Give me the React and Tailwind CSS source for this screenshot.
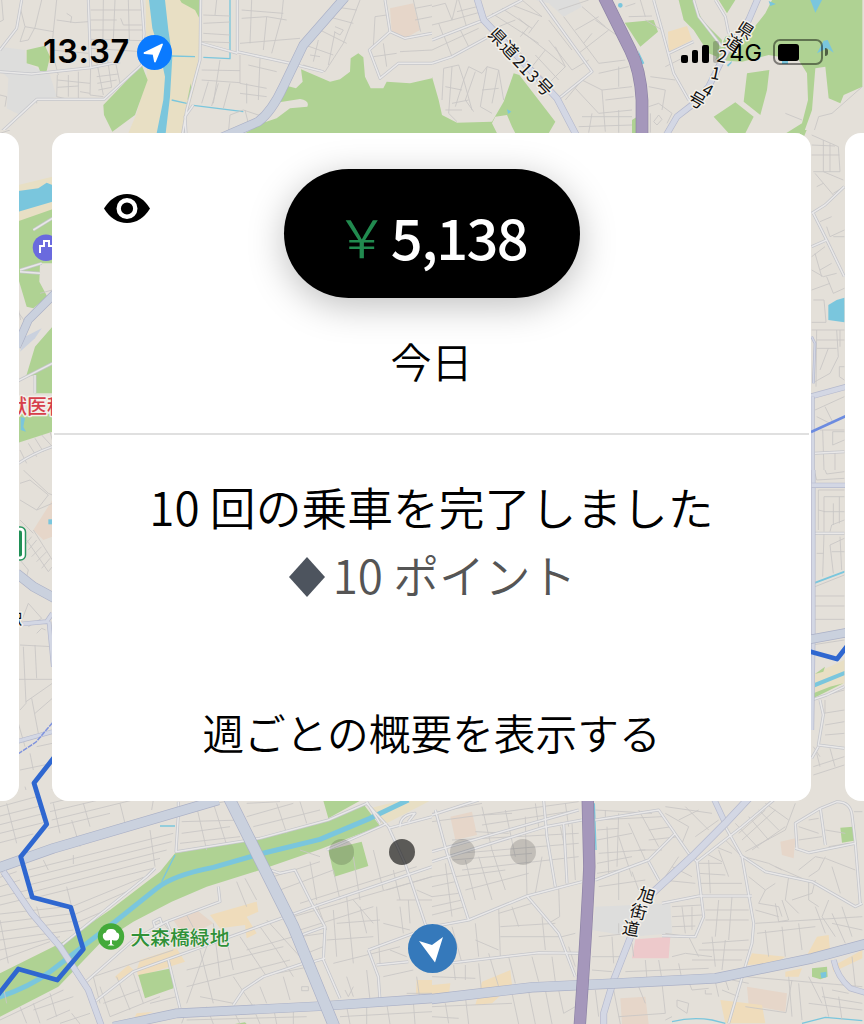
const LAND = "#e4e0d9"
const GREEN = "#afd293"
const SAND = "#e8dfc4"
const WATER = "#7ac6dd"
const PEACH = "#efdcbb"
const PINK = "#e6d6c9"
const GREY = "#dddddc"

// every tile is drawn at 3x, the viewBox brings it back to map size
const tiles = [
    {
        x: 0, y: 0, w: 432, h: 140,
        areas: [
            [SAND, "M437 0 H600 L598 130 L590 240 L545 400 H385 L410 340 L440 235 Z"],
            [GREY, "M0 140 L75 150 L80 190 L150 225 L170 290 L110 300 L60 345 L20 325 L25 235 L0 210Z"],
            [GREEN, "M540 0 H602 L598 55 L585 30 L545 8Z M310 315 L425 195 L443 240 L405 345 L337 395 L312 345Z M80 150 L135 137 L150 170 L140 213 L120 213 L115 200 L80 190Z M572 250 L576 285 L562 300Z"],
            [GREEN, "M735 400 L790 368 L830 355 L870 325 L922 320 Q930 302 900 297 L838 307 L862 258 L888 265 L908 245 L903 208 L990 245 L1020 238 L1050 215 L1052 175 L1075 160 L1090 172 L1095 230 L1112 265 L1150 265 L1160 245 L1230 250 L1296 235 V420 H735Z"],
            [PINK, "M1170 25 L1240 10 L1260 90 L1215 115 L1175 95Z"],
            [WATER, "M447 0 H495 L505 90 L517 170 L510 290 L497 400 H470 L490 300 L495 230 L480 160 L457 85Z"],
        ],
        creek: "M515 168 L585 170 M610 172 L690 176 V0 M515 300 L560 310 M580 316 L730 335",
        thin: "M0 65 L10 60 L5 0 M60 20 L75 80 L60 125 L85 120 L105 82 L125 0 M75 80 L160 95 L170 0 M160 95 L155 150 L265 160 M170 60 L225 68 L265 65 M200 40 L215 50 L212 68 M272 30 H425 M272 60 H350 M272 90 H430 M272 118 L430 122 M272 145 L425 155 M310 0 L308 200 M345 0 L340 118 M385 0 L388 120 M362 55 L370 75 H425 M272 200 L270 285 L310 290 M290 230 L355 222 M292 250 L350 240 M295 270 L335 262 M290 185 L310 285 M320 160 L335 262 M345 180 L360 250 M172 225 L170 290 L205 298 M172 240 L270 250 M172 262 L235 258 M205 225 V290 M235 215 V298 M240 275 L270 280 M155 150 L175 225 M0 285 L20 290 L15 320 M110 300 V310",
        thin2: "M610 45 L690 48 M610 70 L690 66 M610 100 L690 105 M605 125 L690 128 M650 0 L645 45 M725 30 L850 40 M725 55 L800 50 L860 60 M755 0 L750 130 M800 50 L790 150 M720 130 L900 115 M850 0 L845 50 L815 160 M605 210 L720 212 M605 240 L720 248 M660 180 L640 310 M625 245 L605 310 M655 250 L635 318 M720 165 V250 L800 265 M690 250 L670 325 M745 195 L830 215 M780 175 L775 300 M740 250 L740 310 M720 280 L800 290 M690 345 L730 330 L790 350 M690 345 L685 400 M735 330 L745 370 M1080 0 L1030 130 L975 215 L910 195 M960 90 L1040 130 M915 135 L1000 165 M930 165 L960 170 M985 50 L1060 70 M1000 20 L1070 30 M955 120 L940 185 M1005 95 L985 195 M1005 80 L1030 90 L1020 105 L1002 95 M1125 50 L1160 45 M1125 50 L1120 140 M1245 25 L1296 15 M1245 60 L1296 50 M1240 0 L1262 95 M1120 170 L1190 160 M1150 130 L1160 200 M1296 150 L1200 155",
        mid: "M265 0 L272 200 M0 215 L95 222 L270 203 L360 185 M425 0 L432 100 L425 195 L312 298 L110 298 L0 400 M602 0 L600 180 L560 330 L548 400 M712 0 L712 155 L870 190 M605 130 L712 160 M0 150 L50 85 L65 0 M1155 0 L1170 95 L1215 115 L1296 100 M1170 95 L1108 150 L1140 235 L1195 190 L1296 190 M558 400 L555 350 L580 315 M870 190 L970 215",
        roads: [["M1035 -8 L910 135 L850 260 Q815 335 775 365 L660 415", 25, "major"]],
    },
    {
        x: 432, y: 0, w: 432, h: 140,
        areas: [
            [GREY, "M310 0 H440 L450 20 L395 50 L350 10Z"],
            [GREEN, "M0 230 L20 300 L30 345 L75 368 L180 365 L215 305 L245 220 L262 225 L370 365 L350 400 H250 L240 380 L225 345 L190 350 L180 370 L195 400 V420 H0Z M578 68 L665 60 L678 95 L625 140Z M740 0 L755 60 L785 90 L830 160 L865 175 L870 120 L810 60 L785 0Z M860 0 H910 L885 40Z M600 360 L615 350 V400 H600Z"],
            [GREEN, "M1020 0 H1291 V260 L1235 285 L1225 310 L1190 295 L1180 200 L1150 205 L1140 330 L1115 400 H1062 L1110 370 L1128 300 L1125 220 L1100 180 L1010 165 L930 185 L850 180 L880 110 L960 90 L1000 40Z"],
            [GREEN, "M945 220 L1012 210 L1005 270 L985 345 L935 305Z M845 350 L910 307 L965 350 L940 400 H890Z"],
            [PEACH, "M708 95 L765 78 L780 120 L710 155Z"],
            [WATER, "M1135 0 H1170 L1150 38Z M1010 3 L1032 12 L1015 18Z M618 150 L637 190 L628 195Z M1155 160 L1175 122 L1187 120 L1205 158 L1185 145Z M885 195 L900 183 L898 190 L888 200Z M1050 180 H1068 V192 H1050Z M225 328 L238 335 L228 342Z M558 16 A7 7 0 1 0 572 16 A7 7 0 1 0 558 16"],
        ],
        creek: "",
        thin: "M0 20 L40 10 L60 60 L0 75 M60 60 L75 0 M20 70 L35 110 M75 35 L135 20 M80 0 L105 85 M60 60 L150 35 M0 150 L140 85 M35 105 L60 170 M85 90 L110 140 M180 40 L320 130 M210 25 L300 85 M240 15 L330 50 M265 110 L290 80 L260 55 M290 100 L320 60 M330 50 L270 0 M200 80 L250 60 M225 110 L300 200 L340 150 L270 95 M300 200 L350 250 L400 200 L340 150 M310 165 L380 240 M400 200 L370 140 M350 120 L420 210 L470 180 M400 100 L440 160 M350 60 L420 150 M395 50 L455 130 L480 100 M450 20 L520 80 M380 30 L470 0 M430 90 L500 50 M440 160 L530 90 M490 60 L560 110 M455 130 L500 190",
        thin2: "M35 205 L80 195 L95 240 L110 200 L150 220 L165 200 L200 210 L215 300 M35 205 L30 300 M60 200 L50 340 L75 365 M95 240 L70 320 M95 240 L120 330 M130 215 L100 300 L125 335 M165 200 L145 320 L180 340 M200 210 L180 310 M40 260 L90 270 M60 310 L110 300 M40 330 L90 330 M150 270 L200 265 M400 300 L450 240 L510 270 L600 260 M430 265 L500 340 L600 330 M450 240 L480 215 M500 220 L590 200 M510 270 L520 395 M450 350 H600 M520 300 L605 290 M440 380 L600 375 M500 190 L580 180 M560 200 V260 M480 340 L470 398 M560 330 V398 M580 20 L610 10 M590 50 L660 48 M625 0 L640 50 M655 230 L730 240 M650 260 L700 270 L690 330 M650 320 L680 310 L720 340 L705 370 M665 365 L680 345 L690 358 L675 375Z M655 340 V398 M640 60 L690 90 M700 200 L760 170 M1291 260 L1200 340 L1160 350 L1145 398 M1060 340 L1110 360",
        mid: "M0 120 L155 60 L270 0 M325 0 L480 215 L375 300 M0 190 L60 170 L170 110 M665 0 L690 90 L725 220 L770 300 M785 0 L800 50 L870 140 M710 160 L785 125 M850 0 L880 50 L890 100",
        roads: [
            ["M135 -5 L155 60 L375 295 L435 410", 17, "soft"],
            ["M978 -5 L950 60 L880 160 L830 260 L780 315 L735 350 L700 410", 16, "soft"],
            ["M517 -8 L595 150 Q625 210 630 300 V420", 34, "highway"],
        ],
    },
    {
        x: 0, y: 130, w: 70, h: 340,
        areas: [
            [SAND, "M55 165 L157 140 V245 L55 275Z"],
            [GREEN, "M50 275 L157 238 V400 L120 400 L118 455 L142 500 L100 535 L80 530 L50 430Z M157 590 L105 650 L78 740 L105 735 V790 H157Z M50 850 H157 V905 L50 940Z"],
            [WATER, "M55 183 L115 175 L140 158 L157 165 V215 L55 245Z M62 860 L75 865 L70 890 L78 905 L62 900Z"],
            ["#cad1de", "M75 620 L125 595 L105 625 L60 665Z"],
        ],
        creek: "",
        thin: "M0 10 L30 0 M50 540 L75 575 M50 510 L62 570 M85 940 L110 980 M105 925 L130 965 M125 915 L157 950 M60 960 L80 1000 M150 905 L157 930 M120 490 L157 480",
        mid: "M50 755 L157 700 M55 1000 Q100 970 157 950 M60 420 L125 400 M60 425 L120 430 M100 300 L157 265 M105 735 V790",
        roads: [["M165 490 L85 570 L50 650", 22, "major"]],
    },
    {
        x: 0, y: 470, w: 70, h: 340,
        areas: [[PINK, "M157 90 L100 180 L130 210 L157 200Z"], [WATER, "M145 148 H157 V163 H145Z"]],
        creek: "",
        thin: "M70 0 L145 70 L157 75 M60 40 L90 30 L145 75 L110 120 L60 90 M110 120 L157 100 M80 210 L145 305 M100 180 L157 270 M75 225 L95 200 M85 240 L110 210 M95 260 L125 230 M110 275 L140 245 M125 295 L150 265 M145 305 L157 290 M60 150 L100 190 M60 270 L85 300 L80 320 M60 465 L85 400 L125 445 L85 470 M110 490 L125 475 L137 480 M60 525 L157 530 M105 525 L110 625 M55 628 H157 M70 530 L78 700 L60 720 M78 695 L157 640 M95 685 L115 790 M55 760 L75 830 M105 730 L157 685 M60 900 L157 880 M90 850 L100 900 M55 990 L100 975 L157 960 M75 950 L95 1020 M110 830 L157 820",
        mid: "",
        roads: [
            ["M50 310 L100 350 L165 385", 26, "major"],
            ["M65 462 L140 455 L157 430 M147 455 L160 590", 10, "soft"],
            ["M50 815 L157 785", 10, "soft"],
        ],
    },
    {
        x: 800, y: 130, w: 64, h: 340,
        areas: [[GREEN, "M0 0 L20 0 L10 25 L0 20Z"], [WATER, "M85 525 L110 510 L133 503 V577 L85 570Z"]],
        creek: "",
        thin: "M35 15 L115 50 L120 125 L40 125 M70 30 V125 M90 40 V125 M35 75 H118 M35 45 L105 48 M45 130 L100 195 M70 125 L130 150 M50 170 L70 160 M60 275 L95 260 M100 190 L133 170 M80 290 L90 320 L133 300 M100 320 H133 M35 380 L75 350 M45 370 L65 440 M60 420 L95 400 M35 420 L70 440 L110 430 M80 440 L100 490 L133 475 M35 480 L90 460 M40 510 H72 L78 577 M35 577 H78 M35 600 H133 M50 600 L48 770 M50 630 H133 M50 655 H110 M110 600 L115 680 L90 730 L45 755 M85 655 L60 720 M120 600 V650 M133 710 H118 V740 L133 750 M45 840 L133 800 M50 860 L90 880 M75 830 L100 880 M60 900 H133 M68 900 L72 1020 M98 905 H133 M98 905 V945 L133 930 M105 965 V1020",
        mid: "M35 250 L75 225 L133 170 M40 250 L80 330 L133 440 M35 350 L80 330 M45 970 L133 965",
        roads: [["M30 800 L140 770", 14, "soft"], ["M38 800 V1030", 8, "soft"], ["M35 620 L45 640 L40 760", 4, "soft"]],
    },
    {
        x: 800, y: 470, w: 64, h: 340,
        areas: [[SAND, "M45 610 L133 570 V640 L45 680Z"], [GREEN, "M45 612 L75 590 L70 605Z M40 670 L90 650 L130 640 L40 685Z"], [WATER, "M45 335 L133 302 V308 L45 341Z M45 638 L133 603 V616 L45 652Z"]],
        creek: "",
        thin: "M45 10 L50 30 L133 25 M75 0 L80 12 L133 5 M55 60 H133 M55 60 V180 M72 80 H133 M72 80 V185 M72 125 H133 M55 120 L75 125 M118 80 V160 M90 185 L95 165 L133 150 M100 100 V165 M72 190 L68 320 M50 250 H70 M90 225 L100 310 M90 225 L133 205 M95 245 H133 M120 200 L125 300 M45 350 L133 315 M45 378 H133 M45 408 H133 M45 448 H133 M35 525 L133 510 M75 690 V730 M80 675 L133 660 M70 730 L133 720 M75 765 L133 755 M75 795 L133 790 M50 850 L60 890 M90 835 L105 890 M40 890 L133 860 M40 915 L133 885 M40 830 L60 860 M45 1000 Q90 970 133 1000",
        mid: "M45 190 H133 M60 690 L70 735 L55 825 L133 835 M35 690 L80 675 L133 650 M35 865 L55 830 M40 1000 Q90 960 150 1000 M120 1000 L145 970",
        roads: [["M40 -5 V500 L36 780", 9, "soft"], ["M35 46 H140", 12, "soft"], ["M30 508 L140 488", 24, "major"]],
    },
    {
        x: 0, y: 790, w: 432, h: 234,
        areas: [
            [PINK, "M520 390 L590 360 L640 400 L600 420 L540 420Z"],
            [PEACH, "M630 375 L770 335 L775 365 L740 380 L770 430 L740 445 L735 405 L660 415Z M420 510 L530 475 L555 515 L415 560 L410 540Z M345 560 L385 525 L400 540 L355 572Z M1250 570 H1296 V612 H1248Z M410 670 L460 665 L400 690Z"],
            [GREEN, "M0 550 L190 455 L330 360 L480 245 L525 190 L780 145 L985 90 L1090 42 L1140 108 L960 178 L780 240 L620 290 L515 335 L400 395 L300 460 L175 590 L0 680Z M970 32 H1080 L985 85Z M985 180 L1085 155 L1105 228 L1003 260Z M415 555 L515 535 L520 595 L435 625Z M705 702 L735 697 L740 702Z"],
            [SAND, "M1110 55 L1200 32 H1290 L1150 105Z"],
        ],
        creek: "M480 108 H525 M525 195 L485 275",
        thin: "M0 50 L110 20 M0 78 L120 48 M0 104 L125 72 M0 130 L130 98 M0 158 L100 132 M155 90 L480 10 M150 65 L380 10 M145 115 L330 70 M150 40 L250 15 M0 290 L60 270 M0 262 L50 245 M85 240 L520 130 M85 262 L515 155 M90 284 L500 180 M100 305 L480 205 M110 322 L460 235 M215 350 L430 262 M220 375 L380 305 M225 400 L320 360 M0 320 L85 300 M0 345 L95 322 M0 372 L200 350 M0 398 L210 372 M0 425 L215 395 M0 450 L220 420 M0 480 L180 440 M0 510 L150 455 M20 40 L50 160 M160 40 L180 130 M215 90 L240 170 M250 40 L270 110 M360 40 L380 120 M450 120 L465 230 M220 195 V222 M200 290 L215 350 M130 210 L145 240 M0 390 L25 520 M110 350 L130 420 M10 590 L20 640 M460 30 L455 60",
        thin2: "M545 60 L700 30 M545 95 L730 90 M545 130 L690 110 M540 160 L720 140 M590 50 L620 180 M640 40 L680 165 M740 80 L880 40 M760 110 L960 60 M830 40 L860 130 M900 35 L920 100 M740 40 L840 35 M710 275 L740 350 M735 265 L770 330 M410 430 L450 480 M480 385 L520 440 M560 375 L600 450 M640 400 L660 560 M680 450 L700 540 M720 440 L800 560 M740 480 L880 440 M560 540 L850 470 M600 480 L640 640 M560 590 L870 510 M600 620 L700 640 M620 470 L560 640 M780 410 L830 480 L880 560 M800 390 L900 500 M830 550 L930 530 M780 590 L800 640 M850 560 L870 630 M700 560 L760 650 M905 590 H925 V602 H905Z M300 640 L280 560 L520 480 M300 590 L330 680 M350 560 L390 660 M400 550 L430 640 M330 680 L480 620 M310 640 L420 600 M450 640 L530 620 M0 690 L190 600 M60 650 L80 700 M100 640 L120 700 M150 610 L170 680 M100 660 L220 620 M140 690 L210 660 M215 670 L240 702 M180 700 L270 670",
        thin3: "M820 260 L960 215 M840 300 L1000 240 M900 180 L960 200 M900 340 L1250 230 M880 380 L1296 260 M900 420 L1120 350 M930 215 L950 330 M1000 240 L1020 330 M1060 200 L1080 330 M1120 180 L1150 300 M1180 240 L1200 330 M1040 320 L1060 520 M1080 350 L1100 430 M1130 350 L1140 520 M1000 360 L1010 500 M950 340 L980 420 M1060 330 L1120 400 M1010 400 L1140 390 M980 450 L1120 440 M900 440 L970 430 M920 490 L970 470 M1000 520 L1200 470 M1040 560 L1060 620 M1035 600 L1045 620 L1060 590 M1100 540 L1110 630 M1200 350 L1210 430 M1150 400 L1230 420 M1170 480 L1220 500 M1250 300 L1296 320 M1160 300 L1296 260 M1250 560 L1260 630 M1220 610 H1296 M1190 330 L1296 330 M1225 330 L1230 400 M1150 560 L1240 540 M560 660 L545 700 M620 650 L640 702 M700 660 L720 702 M760 655 L780 702 M820 650 L830 702 M560 690 L920 680 M880 650 V702 M1040 650 L1050 702 M1100 650 V702 M1160 640 L1170 702 M1020 680 L1296 665 M1240 635 L1245 702",
        mid: "M535 75 L528 185 L780 145 L985 90 L1100 40 L1165 110 L1215 220 L1275 400 L1296 440 M1100 35 L1140 100 M535 35 V70 M255 578 L400 450 L500 395 L660 335 L655 290 M500 395 L515 430 M285 635 L400 545 L830 390 L970 340 L1296 230 M505 510 L540 655 M810 240 L840 250 L885 240 L935 340 L975 410 L970 510 L1020 625 M905 435 L975 410 M940 515 L975 505 M790 560 L940 510 M700 645 L730 600 L790 560 M1105 480 L1135 560 L1140 630 M1105 480 L1240 430 M1130 525 L1225 515 M980 180 L1140 110 L1160 100 M1200 110 Q1200 75 1245 70 L1225 95 M1165 115 L1296 80 M460 395 L480 385 L485 400 L465 410Z M180 470 L440 260 L465 235",
        roads: [
            ["M-10 235 L160 175 L655 30", 27, "major"],
            ["M10 245 L95 370 L180 470 L265 600 L305 710", 16, "soft"],
            ["M340 710 L530 670 L970 648 L1300 625", 25, "major"],
            ["M685 20 L740 130 L880 410 L1005 715", 32, "major"],
        ],
        river: "M-5 622 Q90 590 150 545 Q260 460 345 395 L470 295 Q520 255 640 232 L780 192 L960 148 L1110 85 L1225 30",
    },
    {
        x: 432, y: 790, w: 432, h: 234,
        areas: [
            [PINK, "M55 80 L120 65 L135 135 L70 150Z M1045 155 L1090 145 L1085 205 L1050 195Z M945 590 L1065 610 L1060 665 L950 645Z M565 625 L640 620 L650 702 H570Z"],
            [GREY, "M490 350 L715 340 L720 430 L600 440 L480 420Z"],
            ["#edc9cb", "M610 448 L715 440 L710 505 L600 505Z"],
            [PEACH, "M0 585 L55 580 L50 620 L0 615Z M150 575 L235 540 L240 585 L180 640 L130 645Z M945 525 L960 490 L1060 500 L1030 520Z M1155 440 L1190 435 L1195 490 L1120 505Z M1200 530 L1291 480 V505 L1205 545Z M865 630 L990 645 L1000 700 H880Z M1060 545 L1110 535 L1100 560 L1060 560Z"],
            [GREEN, "M1225 113 L1263 110 L1266 152 L1230 158Z M1140 535 L1185 530 L1187 560 L1165 568 L1140 560Z"],
            [WATER, "M1165 548 L1183 545 V562 L1168 565Z"],
        ],
        creek: "M720 695 Q780 680 840 690 L880 700 M1110 700 L1180 682 L1291 692 M487 40 L492 180",
        thin: "M0 70 L150 40 M0 95 L440 35 M150 75 L240 70 M150 105 L440 60 M130 125 L230 130 M60 150 L440 130 M80 190 L440 160 M60 210 L300 190 M90 240 L440 200 M70 260 L220 240 M100 300 L290 250 M0 260 L60 250 M0 290 L70 275 M0 320 L80 310 M0 350 L90 330 M0 375 L100 350 M40 220 L60 380 M100 210 L130 330 M140 200 L180 330 M180 180 L220 300 M220 60 L250 200 M150 50 L180 180 M280 80 L285 320 M310 40 L320 110 M330 200 L310 310 M385 110 L400 180 M400 40 L410 110 M420 100 L430 270 M200 350 L205 500 M130 400 L140 500 M60 410 L90 520 M205 410 L370 400 M205 440 L390 440 M380 290 L383 380 L350 400 M330 380 L340 480 M240 350 L260 410 M300 340 L200 370 M130 450 L200 480 M390 440 L430 430 M410 470 L430 530 M65 525 L70 570 M100 525 V570 M140 520 L150 620 M170 490 L200 590 M230 500 L250 580 M0 560 L130 565 M300 500 L320 575 M360 500 L370 575 M240 610 L260 702 M290 605 L310 702 M340 600 L360 702 M100 620 L110 702 M0 650 L240 640 M40 640 L50 700 M380 600 L395 670 L430 650 M0 680 L80 685",
        thin2: "M490 60 L660 70 M490 90 L690 80 M495 120 L560 115 M495 150 L600 130 M500 190 L640 180 M495 220 L600 200 M495 250 L560 240 M525 110 L530 250 M560 70 L555 230 M590 100 L640 210 M620 60 L680 170 M560 140 L600 260 M520 60 V90 M650 120 L720 110 M650 150 L740 140 M620 180 L690 180 M560 240 V330 M600 245 L620 300 M500 290 L640 270 M700 70 L770 110 L750 160 M760 50 L830 120 M700 50 L840 70 M740 90 L800 60 M790 140 L860 90 M720 230 L780 260 M690 270 L790 280 M740 200 L700 260 M800 220 H870 M800 250 L880 255 M830 210 L835 310 M860 180 L890 260 M800 280 L930 280 M820 190 L870 215 M850 170 L900 190 M880 150 L930 200 M910 100 L980 175 M950 80 L1010 150 M980 60 L1040 120 M930 150 L1030 60 M920 130 L1000 60 M960 180 L1060 110 M1000 40 L1070 90 M940 185 L1060 120 L1090 40 M935 200 L1010 220 L1050 240 M720 350 L810 345 M720 380 L810 375 M750 350 L760 430 M720 410 L790 408 M780 350 V420 M820 360 H950 M820 390 H950 M860 330 L850 440 M900 320 L890 450 M700 430 L770 440 L800 500 M720 500 L760 490 L840 500 M810 460 L950 450 M800 480 H950 M840 440 L850 530 M880 450 L870 540 M780 510 L930 510 M640 510 L645 570 M680 510 L690 570 M540 440 L545 520 M480 500 L570 500 M500 440 L590 430 M480 540 L540 545 M740 520 L750 570 M580 545 L830 535 M560 400 V430 M600 460 L605 500",
        thin3: "M950 260 L1000 300 L980 340 L1040 350 L1050 380 M1000 300 L1030 280 M1030 340 L1040 395 L1070 390 L1050 330 M1070 260 L1060 330 L1100 370 M1130 270 L1130 330 L1160 350 M1080 330 L1140 310 L1150 270 M1180 200 L1160 240 L1130 260 M1180 205 L1270 240 M1200 230 L1225 310 M1100 240 L1150 200 L1175 205 M970 360 L1040 380 M970 400 L1291 380 M975 430 L1150 410 M1150 350 L1180 430 M1200 370 L1240 460 M1100 400 L1110 480 M1050 410 L1060 500 M1000 420 L1010 500 M1200 400 L1291 420 M1230 350 L1260 440 M1190 330 L1170 380 L1210 440 M1030 230 L1110 265 M1190 170 L1250 160 M1130 90 L1160 85 M1180 120 L1240 130 M1100 110 L1160 130 M1100 150 L1170 140 M1266 65 H1291 M545 600 L565 702 M620 590 L640 640 M735 630 L770 640 L765 670 L735 650Z M690 580 L700 670 M770 575 L780 600 L830 595 M820 600 V612 H840 M850 575 L860 620 M880 570 L890 600 M560 680 L700 670 M700 690 L720 680 M490 600 L500 680 M940 560 L1291 590 M1070 560 L1080 680 M940 650 L1062 668 L1080 570 M1130 560 L1170 640 M1100 580 L1110 690 M1170 590 L1190 680 M1200 600 L1250 610 M1130 640 L1291 660 M1220 620 L1230 690 M1260 500 L1270 590 M1170 620 L1291 640 M920 620 L870 600 M900 570 L950 580",
        mid: "M10 60 L45 190 L110 390 L285 318 L450 275 M0 75 L140 30 M0 215 L340 110 L450 90 M0 410 L110 390 M335 32 L345 140 L370 290 M395 100 L405 280 M0 185 L440 60 M285 318 L380 430 L430 560 M50 520 L320 488 L440 490 M490 270 L650 210 L730 130 M650 215 L680 270 M490 90 L680 60 L770 190 L795 215 L815 380 L790 440 L690 437 M795 215 L930 110 L1025 30 M880 110 L930 200 L965 400 L960 460 L890 700 M690 340 L800 318 L960 318 M925 195 L1000 245 L1140 275 L1270 350 L1291 340 M1090 175 L1130 188 L1270 160 L1260 75 Q1255 35 1215 35 L1165 55 L1090 100 L1095 175 M1165 55 L1180 165 M1270 160 L1285 345",
        roads: [
            ["M845 25 L880 100", 14, "soft"],
            ["M950 25 L880 100 L780 200 L660 310", 19, "soft"],
            ["M600 430 L545 570 L515 670 V710", 17, "soft"],
            ["M1205 510 Q1215 560 1255 595 L1300 608", 14, "soft"],
            ["M-10 628 L300 592 L560 580 L850 565 Q1020 530 1140 505 L1300 462", 27, "major"],
            ["M467 20 L472 230 Q465 400 443 710", 33, "highway"],
        ],
    },
]

const roadColors = {
    major: ["#abb1c7", "#cad1de"],
    soft: ["#b5b9cd", "#d3d7e4"],
    highway: ["#8d83a5", "#a597bb"],
}

const Tile = ({ tile }) => {
    return (
        <svg x={tile.x} y={tile.y} width={tile.w} height={tile.h} viewBox={`0 0 ${tile.w * 3} ${tile.h * 3}`} fill="none" strokeLinejoin="round">
            <rect width="100%" height="100%" fill={LAND} />
            {tile.areas.map(([fill, d], i) => <path key={i} d={d} fill={fill} />)}
            {tile.creek && <path d={tile.creek} stroke={WATER} strokeWidth="4" />}
            {tile.river && <path d={tile.river} stroke={WATER} strokeWidth="15" />}
            <path d={tile.thin} stroke="#c8c6c5" strokeWidth="2.6" />
            {tile.thin2 && <path d={tile.thin2} stroke="#c8c6c5" strokeWidth="2.6" />}
            {tile.thin3 && <path d={tile.thin3} stroke="#c8c6c5" strokeWidth="2.6" />}
            <path d={tile.mid} stroke="#c5c6cb" strokeWidth="9" />
            <path d={tile.mid} stroke="#e9e8e8" strokeWidth="4.5" />
            {tile.roads.map(([d, width, kind], i) => (
                <g key={i}>
                    <path d={d} stroke={roadColors[kind][0]} strokeWidth={width + 4} />
                    <path d={d} stroke={roadColors[kind][1]} strokeWidth={width} />
                </g>
            ))}
        </svg>
    )
}

// single characters that follow the curve of a road
const roadLabels = [
    ["県", 746, 29, 33], ["道", 734, 42, 33], ["2", 722.5, 55, 12], ["1", 716, 72, 12], ["4", 708.5, 89, 30], ["号", 697.5, 99, 30],
    ["県", 498.5, 36, 46], ["道", 510.5, 49, 46], ["2", 520.5, 60.5, 46], ["1", 527, 68, 46], ["3", 534, 75.5, 46], ["号", 545, 86, 46],
    ["旭", 647, 894, 17], ["街", 638.7, 910.5, 14], ["道", 631.3, 927.3, 10],
]

const Map = () => {
    return (
        <svg className="absolute inset-0 font-['Noto_Sans_CJK_JP',sans-serif]" width="864" height="1024" viewBox="0 0 864 1024">
            {tiles.map((tile, i) => <Tile key={i} tile={tile} />)}

            {/* dashed railway and the blue route */}
            <g fill="none" stroke="#7f93de" strokeWidth="1.5">
                <path d="M18 754 L36 742 L54 721" strokeDasharray="5 1" />
                <path d="M811 432 L846 416" strokeWidth="2.5" stroke="#6c8be0" />
            </g>
            <g fill="none" stroke="#2f67d0" strokeWidth="4.8" strokeLinejoin="round">
                <path d="M54 757.5 L34 783 L46.7 824.3 L20.7 856.7 L32.3 897.3 L70.7 907.3 L83.3 949.3 L57.3 980 L18.3 969 L-2 995" />
                <path d="M808 651 L837 659 L848 645" />
            </g>

            {/* places */}
            <circle cx="46" cy="247.7" r="13.3" fill="#6a6ade" />
            <path d="M40 253 V246 H44 V241 H49 V246 H54" fill="none" stroke="#fff" strokeWidth="2" />
            <rect x="2" y="527" width="23.5" height="33" rx="5" fill="#fff" stroke="#2a9660" strokeWidth="1.5" />
            <rect x="2" y="530.5" width="20" height="26" rx="2" fill="#1f8f55" />
            <circle cx="111" cy="936.5" r="13.2" fill="#44aa3a" />
            <path d="M110 940 V944 L107.500 945.500 H114.500 L112 944 V940 Q118 942 119 937.500 Q120 933 116.500 932.500 Q115.500 928.500 111 929 Q106.500 928.500 106 932.500 Q102 933 103 937.500 Q104.500 942 110 940Z" fill="#fff" />

            <g fontWeight="500" dominantBaseline="central" stroke="#f3f0ea" strokeWidth="3" paintOrder="stroke" strokeLinejoin="round">
                <text x="130.5" y="936.5" fontSize="19.800" fill="#2f9138" strokeWidth="1.5">大森橋緑地</text>
                <text x="7" y="405" fontSize="20" fill="#d63f4a">獣医科</text>
                <text x="8" y="618" fontSize="14" fill="#111">駅</text>
                <g fontSize="17" fontWeight="400" fill="#111" textAnchor="middle">
                    {roadLabels.map(([char, x, y, angle], i) => (
                        <text key={i} x={x} y={y} transform={`rotate(${angle} ${x} ${y})`}>{char}</text>
                    ))}
                </g>
            </g>
        </svg>
    )
}

const StatusBar = () => {
    return (
        <div className="flex h-[133px] items-start justify-between pt-[34px] pr-[36px] pl-[43px] font-['Inter',sans-serif] text-black">
            <div className="flex items-center gap-[7px]">
                <span className="text-[32.500px] leading-[36px] font-semibold tracking-[0.5px]">13:37</span>
                <svg width="35" height="35" viewBox="0 0 35 35">
                    <circle cx="17.500" cy="17.500" r="17.500" fill="#0a7aff" />
                    <path d="M25 9.500 L18 26.500 L16.500 18.800 L7.500 18 Z" fill="#fff" stroke="#fff" strokeWidth="1.800" strokeLinejoin="round" />
                </svg>
            </div>
            <div className="flex h-9 items-center">
                <div className="mt-[3px] flex h-[18px] items-end gap-1">
                    <div className="h-2 w-[7px] rounded-[2px] bg-black"></div>
                    <div className="h-[13px] w-[6.500px] rounded-[2px] bg-black"></div>
                    <div className="h-[18px] w-[6.500px] rounded-[2px] bg-black"></div>
                    <div className="h-[22px] w-[6.500px] rounded-[2px] bg-black/20"></div>
                </div>
                <span className="ml-[10px] pt-px text-[23.500px] leading-9">4G</span>
                <div className="ml-[11px] flex items-center gap-[2px]">
                    <div className="h-[26px] w-[50px] rounded-[7px] border-2 border-black/45 p-[2.500px]">
                        <div className="h-full w-[21px] rounded-[3px] bg-black"></div>
                    </div>
                    <div className="h-2 w-[3px] rounded-r-full bg-black/55"></div>
                </div>
            </div>
        </div>
    )
}

const EarningsCard = () => {
    return (
        <div className="flex h-full w-[759px] shrink-0 flex-col rounded-2xl bg-white text-center font-[350] text-black">
            <div className="mx-[2px] grid h-[302px] grid-cols-[1fr_296px_1fr] border-b-2 border-[#e0e0e0] pt-9">
                <svg className="mt-[25px] ml-[50px]" width="46" height="29" viewBox="0 0 46 29">
                    <path d="M0 14.500 Q9 0 23 0 Q37 0 46 14.500 Q37 29 23 29 Q9 29 0 14.500Z" />
                    <circle cx="23" cy="14.500" r="8.300" fill="#000" stroke="#fff" strokeWidth="4.400" />
                </svg>
                <div>
                    <div className="flex h-[129px] items-center justify-center gap-[3px] rounded-full bg-black pt-1 shadow-[0_8px_36px_rgba(0,0,0,0.25)]">
                        <span className="text-[52px] leading-none text-[#218a4f]">{"\uffe5"}</span>
                        <span className="text-[56px] leading-none font-medium tracking-[-1.6px] text-white">5,138</span>
                    </div>
                    <div className="mt-[34px] text-[41px] leading-[56px]">今日</div>
                </div>
            </div>
            <div className="pt-[37px] text-[45.800px] leading-[68px]">10 回の乗車を完了しました</div>
            <div className="flex items-center justify-center gap-[8px] pl-[2px] text-[45.800px] leading-[68px] text-[#555]">
                <svg className="mt-[5px]" width="36" height="40" viewBox="0 0 36 40">
                    <path d="M18 0 L36 20 L18 40 L0 20Z" fill="#4d545e" />
                </svg>
                <span>10 ポイント</span>
            </div>
            <div className="mt-[90px] text-[41.700px] leading-[68px]">週ごとの概要を表示する</div>
        </div>
    )
}

const App = () => {
    return (
        <div className="relative h-[1024px] w-[864px] overflow-hidden bg-[#e4e0d9] font-['Noto_Sans_CJK_JP',sans-serif]">
            <Map />
            <div className="relative flex h-full flex-col">
                <StatusBar />
                <div className="flex h-[668px] gap-[33.500px]">
                    <div className="w-[18.500px] shrink-0 rounded-r-2xl bg-white"></div>
                    <EarningsCard />
                    <div className="grow rounded-l-2xl bg-white"></div>
                </div>
                <div className="mt-[38px] flex justify-center gap-[35px]">
                    <div className="size-[25.500px] rounded-full bg-black/15"></div>
                    <div className="size-[25.500px] rounded-full bg-black/60"></div>
                    <div className="size-[25.500px] rounded-full bg-black/15"></div>
                    <div className="size-[25.500px] rounded-full bg-black/15"></div>
                </div>
                <div className="mt-[59px] flex justify-center">
                    <svg width="49" height="49" viewBox="0 0 49 49">
                        <circle cx="24.500" cy="24.500" r="24.500" fill="#3579bb" />
                        <path d="M11 17 L24 21 L35 13 L27 38.500 Z" fill="#fff" />
                    </svg>
                </div>
            </div>
        </div>
    )
}

export default App
